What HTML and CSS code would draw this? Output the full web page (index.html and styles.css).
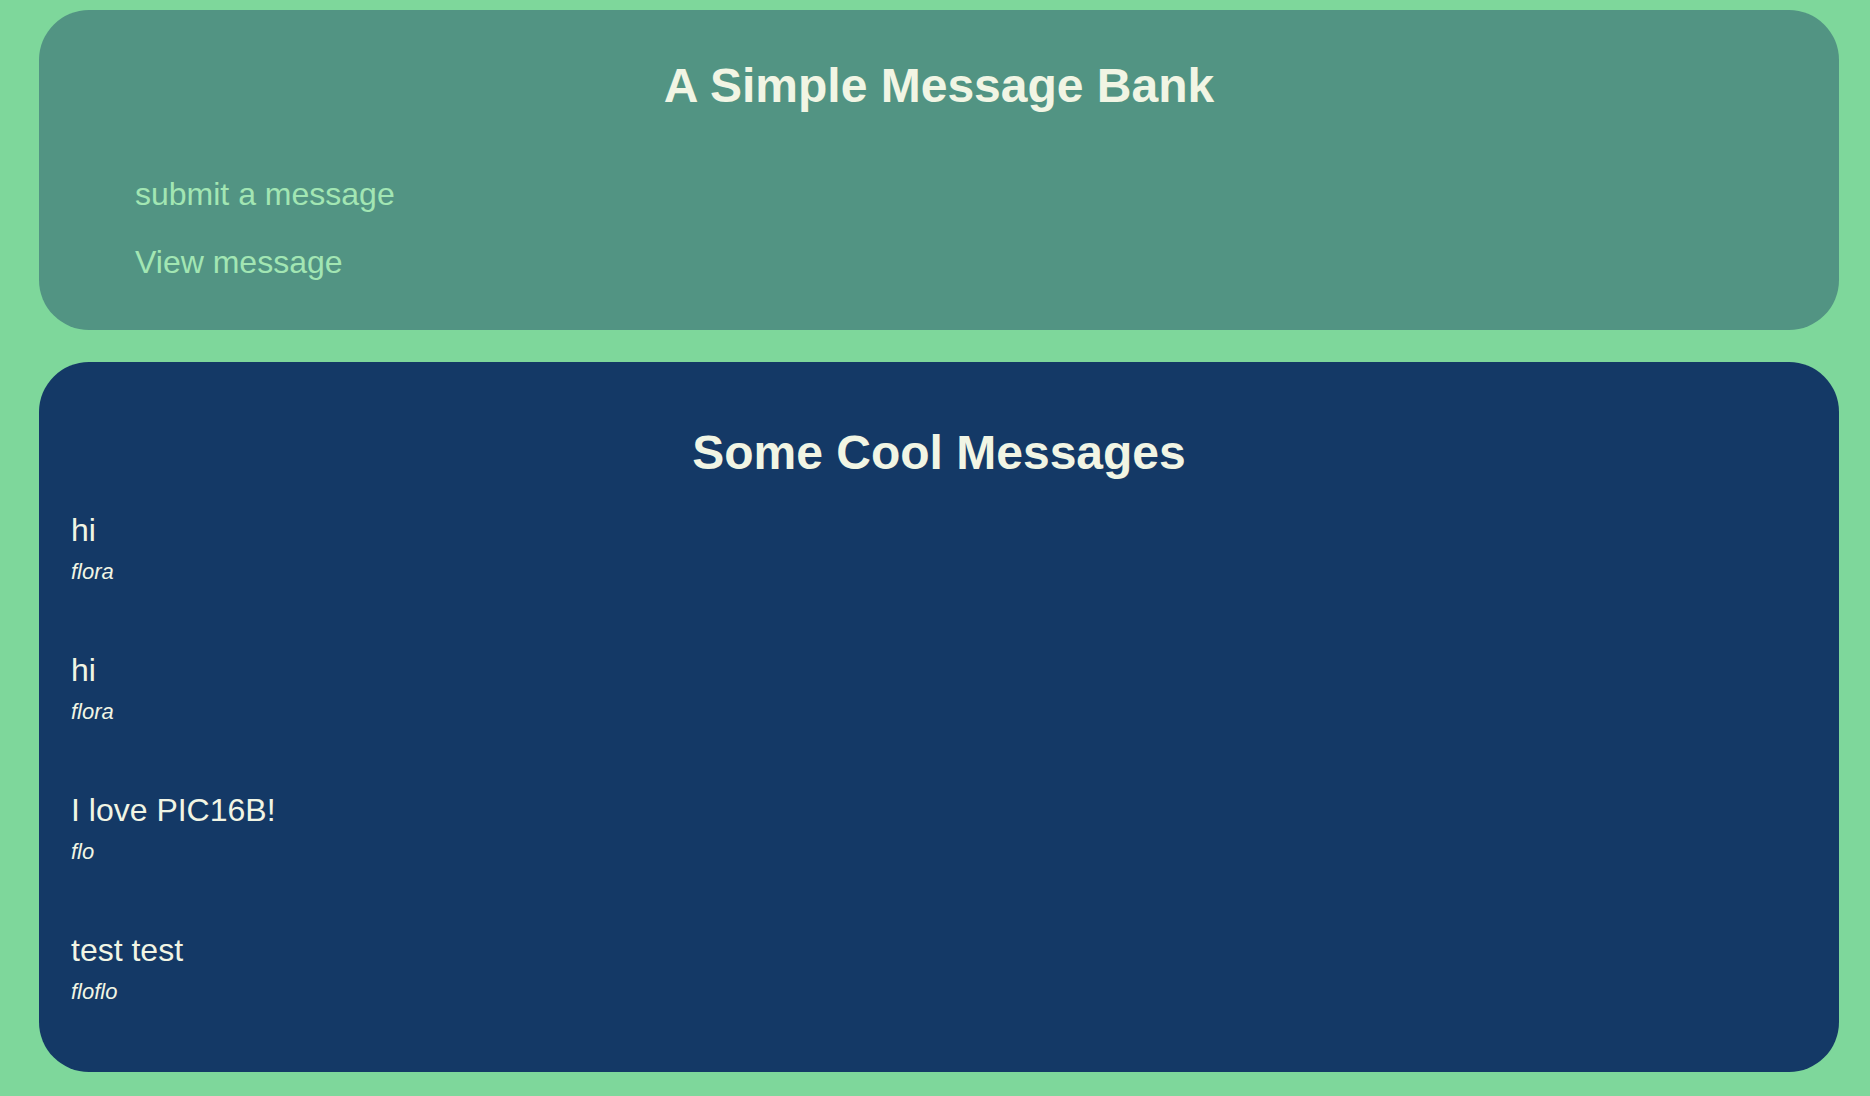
FILE: index.html
```html
<!DOCTYPE html>
<html lang="en">
<head>
<meta charset="utf-8">
<title>A Simple Message Bank</title>
<link rel="stylesheet" href="styles.css">
</head>
<body>
  <header class="panel panel-nav">
    <h1 class="title">A Simple Message Bank</h1>
    <nav class="nav">
      <a class="nav-link" href="#">submit a message</a>
      <a class="nav-link" href="#">View message</a>
    </nav>
  </header>
  <main class="panel panel-messages">
    <h1 class="title title-messages">Some Cool Messages</h1>
    <div class="message">
      <div class="message-text">hi</div>
      <div class="message-author">flora</div>
    </div>
    <div class="message">
      <div class="message-text">hi</div>
      <div class="message-author">flora</div>
    </div>
    <div class="message">
      <div class="message-text">I love PIC16B!</div>
      <div class="message-author">flo</div>
    </div>
    <div class="message">
      <div class="message-text">test test</div>
      <div class="message-author">floflo</div>
    </div>
  </main>
</body>
</html>
```

FILE: styles.css
```css
html, body {
  margin: 0;
}
body {
  background: #7ed79b;
  padding: 10px 31px 0 39px;
  font-family: "Liberation Sans", Arial, Helvetica, sans-serif;
  color: #f1f5e4;
}
.panel {
  border-radius: 50px;
}
.panel-nav {
  background: #529483;
  padding: 48px 0 50px 96px;
  height: 222px;
  box-sizing: content-box;
}
.panel-nav .title {
  margin-left: -96px;
}
.title {
  margin: 0;
  font-size: 48px;
  line-height: 56px;
  font-weight: bold;
  text-align: center;
  color: #f1f5e4;
}
.nav {
  display: flex;
  flex-direction: column;
  align-items: flex-start;
  gap: 31px;
  margin-top: 62px;
}
.nav-link {
  font-size: 32px;
  line-height: 37px;
  color: #a2e6b3;
  text-decoration: none;
}
.panel-messages {
  margin-top: 32px;
  background: #143966;
  padding: 63px 31px 0 32px;
  height: 647px;
  box-sizing: content-box;
}
.title-messages {
  margin-bottom: 31px;
  margin-left: -32px;
  margin-right: -31px;
}
.message {
  margin-bottom: 68px;
}
.message-text {
  font-size: 32px;
  line-height: 37px;
}
.message-author {
  margin-top: 10px;
  font-size: 22px;
  line-height: 25px;
  font-style: italic;
}
```
